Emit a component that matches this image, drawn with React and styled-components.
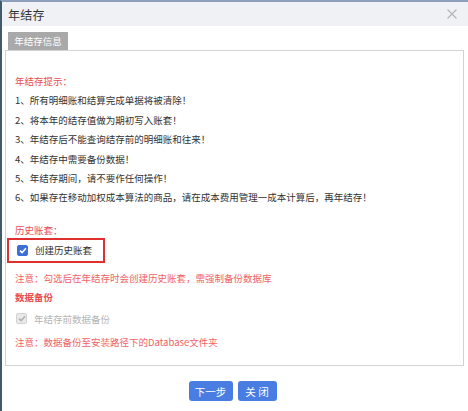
import React from "react";
import styled, { createGlobalStyle } from "styled-components";

const Global = createGlobalStyle`
  html, body { margin: 0; padding: 0; background: #ffffff; }
  * { box-sizing: border-box; }
`;

const Dialog = styled.div`
  width: 468px;
  height: 411px;
  background: #ffffff;
  border-top: 2px solid #8d9fba;
  border-left: 2px solid #3f5b6c;
  font-family: "Noto Sans CJK SC", "Noto Sans", sans-serif;
  display: flex;
  flex-direction: column;
  overflow: hidden;
`;

const TitleBar = styled.div`
  height: 24px;
  flex: none;
  background: #eff1f4;
  display: flex;
  align-items: center;
  justify-content: space-between;
  padding: 0 11px 0 6px;
`;

const Title = styled.span`
  font-size: 12px;
  color: #333333;
  letter-spacing: 0.3px;
`;

const Close = styled.svg`
  width: 10px;
  height: 10px;
  display: block;
`;

const Body = styled.div`
  padding: 6px 4px 0 3px;
  display: flex;
  flex-direction: column;
`;

const Tab = styled.div`
  margin-left: 3px;
  width: 60px;
  height: 18px;
  background: #a9a9a9;
  color: #ffffff;
  font-size: 9.5px;
  display: flex;
  align-items: center;
  justify-content: center;
`;

const Panel = styled.div`
  height: 316px;
  border: 1px solid #d3d3d3;
  padding: 21px 8px 0 9px;
  display: flex;
  flex-direction: column;
`;

const Heading = styled.div`
  font-size: 9.5px;
  line-height: ${(p) => p.$lh || 19.4}px;
  margin-top: ${(p) => p.$mt || 0}px;
  color: #ea4c4f;
  font-weight: ${(p) => (p.$bold ? 700 : 400)};
`;

const Line = styled.div`
  font-size: 9.5px;
  line-height: 19.4px;
  color: #333333;
  white-space: nowrap;
`;

const Note = styled.div`
  font-size: 9.5px;
  line-height: 20px;
  margin-top: ${(p) => p.$mt || 0}px;
  color: #f06265;
  white-space: nowrap;
`;

const Highlight = styled.div`
  margin-left: -8px;
  width: 98px;
  height: 25px;
  border: 2px solid #e02f2f;
  padding-left: 8px;
  display: flex;
  align-items: center;
  gap: 7px;
`;

const CheckRow = styled.div`
  height: 20px;
  margin-top: ${(p) => p.$mt || 0}px;
  padding-left: 1px;
  display: flex;
  align-items: center;
  gap: 7px;
`;

const Box = styled.span`
  width: 11px;
  height: 11px;
  border-radius: 2px;
  background: ${(p) => (p.$disabled ? "#e9e9e9" : "#3d6fd9")};
  border: 1px solid ${(p) => (p.$disabled ? "#d2d2d2" : "#3d6fd9")};
  display: flex;
  align-items: center;
  justify-content: center;
  flex: none;
`;

const Label = styled.span`
  font-size: 9.5px;
  color: ${(p) => (p.$disabled ? "#b4b4b4" : "#333333")};
  white-space: nowrap;
`;

const Buttons = styled.div`
  margin-top: 15px;
  padding-right: 4px;
  display: flex;
  justify-content: center;
  gap: 5px;
`;

const Button = styled.button`
  width: ${(p) => p.$w}px;
  height: 20px;
  border: none;
  border-radius: 3px;
  background: #4a7de2;
  color: #ffffff;
  font-family: "Noto Sans CJK SC", sans-serif;
  font-size: 10.5px;
  padding: 0;
  display: flex;
  align-items: center;
  justify-content: center;
`;

const Check = ({ color }) => (
  <svg width="8" height="7" viewBox="0 0 8 7">
    <path d="M1 3.6 L3.1 5.6 L7 1.3" fill="none" stroke={color} strokeWidth="1.5" />
  </svg>
);

const lines = [
  "1、所有明细账和结算完成单据将被清除！",
  "2、将本年的结存值做为期初写入账套！",
  "3、年结存后不能查询结存前的明细账和往来！",
  "4、年结存中需要备份数据！",
  "5、年结存期间，请不要作任何操作！",
  "6、如果存在移动加权成本算法的商品，请在成本费用管理一成本计算后，再年结存！",
];

export default function App() {
  return (
    <>
      <Global />
      <Dialog>
        <TitleBar>
          <Title>年结存</Title>
          <Close viewBox="0 0 10 10">
            <path d="M0.5 0.5 L9.5 9.5 M9.5 0.5 L0.5 9.5" stroke="#b5b5b5" strokeWidth="1.2" />
          </Close>
        </TitleBar>
        <Body>
          <Tab>年结存信息</Tab>
          <Panel>
            <Heading>年结存提示：</Heading>
            {lines.map((l) => (
              <Line key={l}>{l}</Line>
            ))}
            <Heading $mt={14} $lh={16}>历史账套：</Heading>
            <Highlight>
              <Box>
                <Check color="#ffffff" />
              </Box>
              <Label>创建历史账套</Label>
            </Highlight>
            <Note $mt={5}>注意：勾选后在年结存时会创建历史账套，需强制备份数据库</Note>
            <Heading $lh={18} $bold>数据备份</Heading>
            <CheckRow $mt={3}>
              <Box $disabled>
                <Check color="#b0b0b0" />
              </Box>
              <Label $disabled>年结存前数据备份</Label>
            </CheckRow>
            <Note $mt={3}>注意：数据备份至安装路径下的Database文件夹</Note>
          </Panel>
          <Buttons>
            <Button $w={44}>下一步</Button>
            <Button $w={39}>关 闭</Button>
          </Buttons>
        </Body>
      </Dialog>
    </>
  );
}
